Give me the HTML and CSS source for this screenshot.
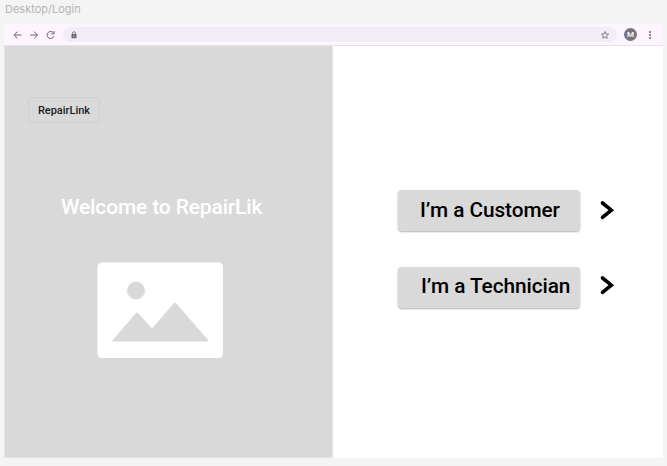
FILE: index.html
```
<!DOCTYPE html>
<html lang="en">
<head>
<meta charset="utf-8">
<title>Desktop/Login</title>
<link rel="stylesheet" href="styles.css">
</head>
<body>
<div class="frame-label">Desktop/Login</div>
<div class="window">
  <header class="toolbar">
    <svg class="nav" viewBox="0 0 42 12"><path d="M8.500 6H1.200M4.500 2.600L1.100 6l3.400 3.400M17 6h7.500M21.200 2.600L24.600 6l-3.400 3.400"/><path d="M40.400 3.800A3.500 3.500 0 1 0 41 7M41.100 2v2.800h-2.800"/></svg>
    <div class="address">
      <svg class="lock" viewBox="0 0 6 8"><path class="body" d="M.5 3h5v4.200h-5z"/><path class="shackle" d="M1.600 3V2.100a1.400 1.400 0 0 1 2.800 0V3"/><circle cx="3" cy="5.100" r=".6"/></svg>
      <svg class="star" viewBox="0 0 10 10"><path d="M5 1.500l1 2.400 2.600.2-2 1.700.6 2.500L5 7 2.800 8.300l.6-2.500-2-1.700 2.600-.2z"/></svg>
    </div>
    <div class="avatar">M</div>
    <svg class="more" viewBox="0 0 4 10"><circle cx="2" cy="2" r=".95"/><circle cx="2" cy="5" r=".95"/><circle cx="2" cy="8" r=".95"/></svg>
  </header>
  <main class="content">
    <section class="intro">
      <div class="brand">RepairLink</div>
      <h1 class="welcome">Welcome to RepairLik</h1>
      <svg class="picture" viewBox="0 0 126 96"><rect x=".5" y=".5" width="125.500" height="95.500" rx="4.500" fill="#fff"/><g fill="#d9d9d9"><circle cx="39" cy="28.500" r="9"/><path d="M15 79L39 51q1-1 2 0L55 66.500 77 41q1-1 2 0L111 78q.5 1.500-.5 1.500H15.500q-1 0-.5-.5z"/></g></svg>
    </section>
    <section class="choices">
      <div class="choice"><button class="role">I’m a Customer</button><svg class="chevron" viewBox="0 0 16 22"><path d="M3.500 4L12.300 11.200 3.500 18.400"/></svg></div>
      <div class="choice second"><button class="role">I’m a Technician</button><svg class="chevron" viewBox="0 0 16 22"><path d="M3.500 4L12.300 11.200 3.500 18.400"/></svg></div>
    </section>
  </main>
</div>
</body>
</html>
```
FILE: styles.css
```
* { box-sizing: border-box; }
body { margin: 0; width: 667px; height: 466px; overflow: hidden; background: #f4f4f4; font-family: Roboto, sans-serif; }
svg { display: block; flex: none; }
.frame-label { height: 24px; padding: 2px 0 0 5px; font: 11px/15px Inter, sans-serif; color: #b5b5b5; }
.window { width: 659px; height: 434px; margin-left: 4px; background: #fff; }
.toolbar { height: 22px; display: flex; align-items: center; background: #fdf5fe; border-bottom: 1px solid #e8e0eb; padding-left: 9px; }
.nav { width: 42px; height: 12px; fill: none; stroke: #6b6570; stroke-width: 1; }
.address { width: 554px; height: 15px; margin-left: 8px; padding: 0 7px 0 8px; border-radius: 8px; background: #f2ecf6; display: flex; align-items: center; justify-content: space-between; }
.lock { width: 6px; height: 8px; }
.lock .body { fill: #6b6570; }
.lock .shackle { fill: none; stroke: #6b6570; stroke-width: .8; }
.lock circle { fill: #f2ecf6; }
.star { width: 10px; height: 10px; fill: none; stroke: #6b6570; stroke-width: .8; }
.avatar { width: 13px; height: 13px; margin-left: 7px; border-radius: 50%; background: #79747e; color: #fff; font-size: 8px; font-weight: 500; line-height: 13px; text-align: center; }
.more { width: 4px; height: 10px; margin-left: 11px; fill: #5c5661; }
.content { height: 412px; display: flex; }
.intro { width: 329px; background: #d9d9d9; border: solid #e5e5e5; border-width: 0 1px 1px; display: flex; flex-direction: column; align-items: flex-start; }
.brand { width: 72px; height: 26px; margin: 51px 0 0 23px; border: 1px solid #d0d0d0; border-radius: 4px; font-size: 11px; font-weight: 500; line-height: 25px; text-align: center; color: #1c1c1c; }
.welcome { margin: 71px 0 0 56px; font-size: 21px; letter-spacing: -.15px; font-weight: 500; line-height: 26px; color: #fff; white-space: nowrap; }
.picture { width: 126px; height: 96px; margin: 42px 0 0 92px; }
.choices { flex: 1; padding: 144px 0 0 65px; display: flex; flex-direction: column; gap: 36px; }
.choice { display: flex; align-items: flex-start; }
.role { width: 182px; height: 41px; padding: 0 0 0 22px; border: 0; border-radius: 4px; background: #d9d9d9; box-shadow: 0 1px 2px #00000050; font: 500 20.800px/41px Roboto, sans-serif; letter-spacing: -.07px; text-align: left; color: #000; white-space: nowrap; }
.second .role { padding: 0 0 3px 23px; line-height: 38px; }
.chevron { width: 16px; height: 22px; margin: 9px 0 0 19px; fill: none; stroke: #000; stroke-width: 3.600; stroke-linecap: round; stroke-linejoin: miter; }
.second .chevron { margin-top: 7px; }
```
